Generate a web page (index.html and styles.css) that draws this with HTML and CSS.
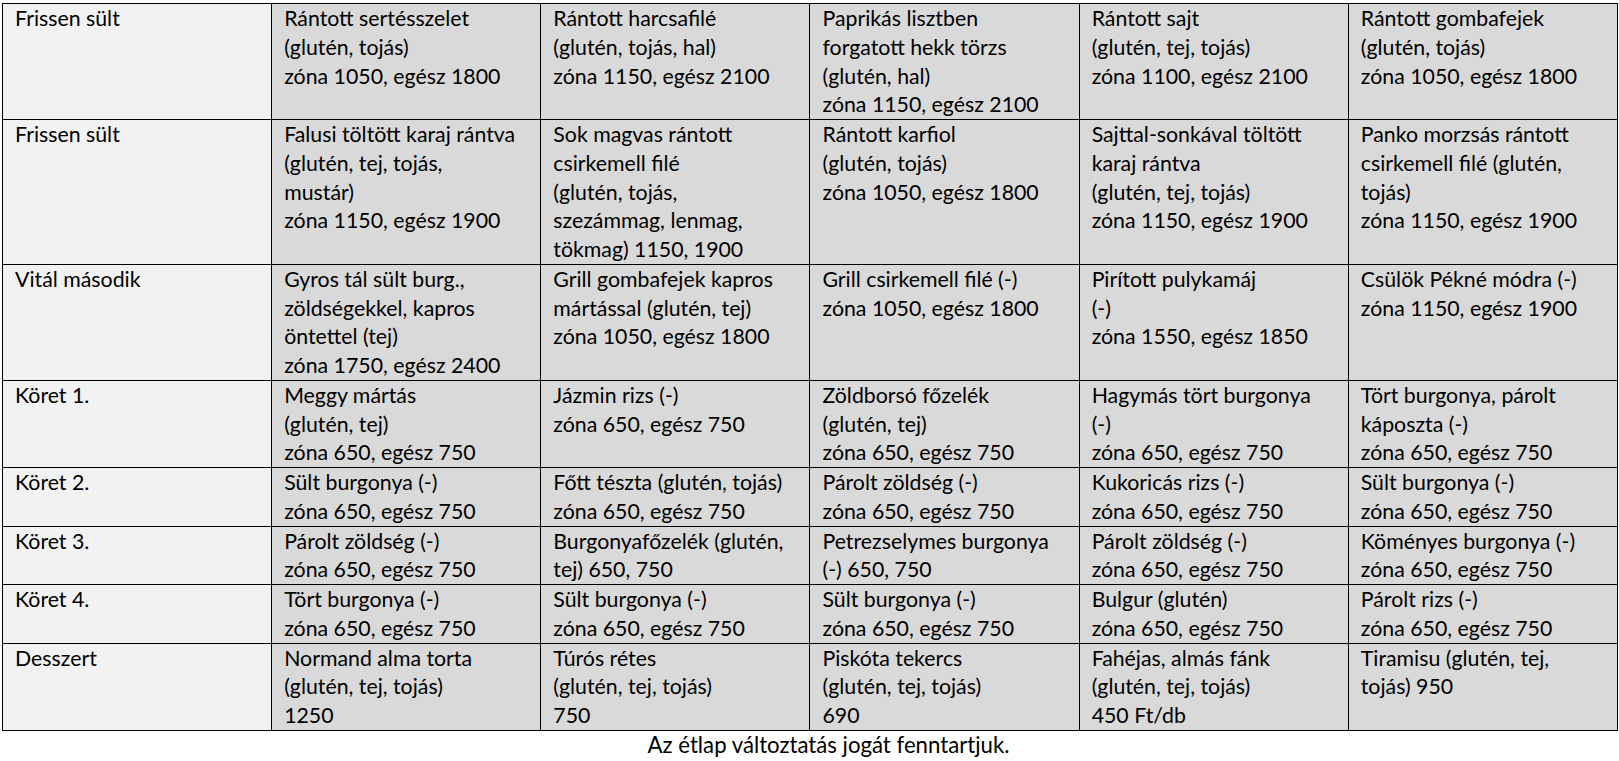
FILE: index.html
```html
<!DOCTYPE html>
<html lang="hu">
<head>
<meta charset="utf-8">
<title>Étlap</title>
<link rel="stylesheet" href="styles.css">
</head>
<body>
<table class="menu">
  <colgroup>
    <col class="col"><col class="col"><col class="col"><col class="col"><col class="col"><col class="col">
  </colgroup>
  <tbody>
    <tr>
      <th>Frissen sült</th>
      <td>Rántott sertésszelet<br>(glutén, tojás)<br>zóna 1050, egész 1800</td>
      <td>Rántott harcsafilé<br>(glutén, tojás, hal)<br>zóna 1150, egész 2100</td>
      <td>Paprikás lisztben<br>forgatott hekk törzs<br>(glutén, hal)<br>zóna 1150, egész 2100</td>
      <td>Rántott sajt<br>(glutén, tej, tojás)<br>zóna 1100, egész 2100</td>
      <td>Rántott gombafejek<br>(glutén, tojás)<br>zóna 1050, egész 1800</td>
    </tr>
    <tr>
      <th>Frissen sült</th>
      <td>Falusi töltött karaj rántva<br>(glutén, tej, tojás,<br>mustár)<br>zóna 1150, egész 1900</td>
      <td>Sok magvas rántott<br>csirkemell filé<br>(glutén, tojás,<br>szezámmag, lenmag,<br>tökmag) 1150, 1900</td>
      <td>Rántott karfiol<br>(glutén, tojás)<br>zóna 1050, egész 1800</td>
      <td>Sajttal-sonkával töltött<br>karaj rántva<br>(glutén, tej, tojás)<br>zóna 1150, egész 1900</td>
      <td>Panko morzsás rántott<br>csirkemell filé (glutén,<br>tojás)<br>zóna 1150, egész 1900</td>
    </tr>
    <tr>
      <th>Vitál második</th>
      <td>Gyros tál sült burg.,<br>zöldségekkel, kapros<br>öntettel (tej)<br>zóna 1750, egész 2400</td>
      <td>Grill gombafejek kapros<br>mártással (glutén, tej)<br>zóna 1050, egész 1800</td>
      <td>Grill csirkemell filé (-)<br>zóna 1050, egész 1800</td>
      <td>Pirított pulykamáj<br>(-)<br>zóna 1550, egész 1850</td>
      <td>Csülök Pékné módra (-)<br>zóna 1150, egész 1900</td>
    </tr>
    <tr>
      <th>Köret 1.</th>
      <td>Meggy mártás<br>(glutén, tej)<br>zóna 650, egész 750</td>
      <td>Jázmin rizs (-)<br>zóna 650, egész 750</td>
      <td>Zöldborsó főzelék<br>(glutén, tej)<br>zóna 650, egész 750</td>
      <td>Hagymás tört burgonya<br>(-)<br>zóna 650, egész 750</td>
      <td>Tört burgonya, párolt<br>káposzta (-)<br>zóna 650, egész 750</td>
    </tr>
    <tr>
      <th>Köret 2.</th>
      <td>Sült burgonya (-)<br>zóna 650, egész 750</td>
      <td>Főtt tészta (glutén, tojás)<br>zóna 650, egész 750</td>
      <td>Párolt zöldség (-)<br>zóna 650, egész 750</td>
      <td>Kukoricás rizs (-)<br>zóna 650, egész 750</td>
      <td>Sült burgonya (-)<br>zóna 650, egész 750</td>
    </tr>
    <tr>
      <th>Köret 3.</th>
      <td>Párolt zöldség (-)<br>zóna 650, egész 750</td>
      <td>Burgonyafőzelék (glutén,<br>tej) 650, 750</td>
      <td>Petrezselymes burgonya<br>(-) 650, 750</td>
      <td>Párolt zöldség (-)<br>zóna 650, egész 750</td>
      <td>Köményes burgonya (-)<br>zóna 650, egész 750</td>
    </tr>
    <tr>
      <th>Köret 4.</th>
      <td>Tört burgonya (-)<br>zóna 650, egész 750</td>
      <td>Sült burgonya (-)<br>zóna 650, egész 750</td>
      <td>Sült burgonya (-)<br>zóna 650, egész 750</td>
      <td>Bulgur (glutén)<br>zóna 650, egész 750</td>
      <td>Párolt rizs (-)<br>zóna 650, egész 750</td>
    </tr>
    <tr>
      <th>Desszert</th>
      <td>Normand alma torta<br>(glutén, tej, tojás)<br>1250</td>
      <td>Túrós rétes<br>(glutén, tej, tojás)<br>750</td>
      <td>Piskóta tekercs<br>(glutén, tej, tojás)<br>690</td>
      <td>Fahéjas, almás fánk<br>(glutén, tej, tojás)<br>450 Ft/db</td>
      <td>Tiramisu (glutén, tej,<br>tojás) 950</td>
    </tr>
  </tbody>
</table>
<p class="note">Az étlap változtatás jogát fenntartjuk.</p>
</body>
</html>
```
FILE: styles.css
```css
html, body {
  margin: 0;
  padding: 0;
  background: #ffffff;
}

body {
  padding: 3px 0 0 2px;
  font-family: Lato, "Open Sans", sans-serif;
  font-size: 21.3px;
  color: #000000;
}

.menu {
  width: 1616px;
  border-collapse: collapse;
  table-layout: fixed;
}

.menu th,
.menu td {
  border: 1px solid #000000;
  padding: 0 10px 0 12px;
  vertical-align: top;
  text-align: left;
  font-weight: normal;
  line-height: 28.75px;
  white-space: nowrap;
  background: #d9d9d9;
}

.menu th {
  background: #f2f2f2;
}

.note {
  margin: 0;
  padding-left: 36px;
  text-align: center;
  font-size: 22.2px;
  line-height: 28px;
}
```
